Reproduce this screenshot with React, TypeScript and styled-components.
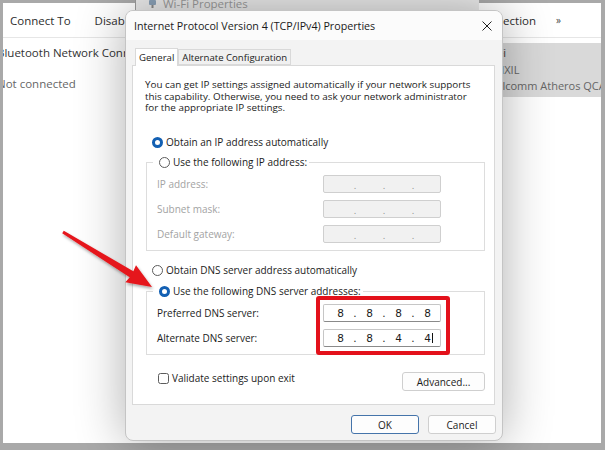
import styled, { createGlobalStyle } from 'styled-components'

const GlobalStyle = createGlobalStyle`
  html, body {
    margin: 0;
    padding: 0;
  }
  body {
    width: 605px;
    height: 450px;
    overflow: hidden;
    font-family: 'Open Sans', 'Noto Sans', sans-serif;
    color: #1b1b1b;
  }
`

const Desktop = styled.div`
  position: relative;
  width: 605px;
  height: 450px;
  overflow: hidden;
  background: #a9a9a9;
`

/* explorer window in the back */
const Explorer = styled.div`
  position: absolute;
  left: 3px;
  top: 3px;
  right: 4px;
  bottom: 7px;
  background: #fff;
  display: flex;
  flex-direction: column;
  overflow: hidden;
`

const Toolbar = styled.div`
  height: 34px;
  flex-shrink: 0;
  display: flex;
  align-items: center;
  justify-content: space-between;
  padding: 0 40px 0 7px;
  border-bottom: 1px solid #e6e6e6;
  font-size: 11.5px;
  color: #2d2d2d;
`

const ToolGroup = styled.div`
  display: flex;
  align-items: center;
  gap: 24px;
  white-space: nowrap;
`

const Chevron = styled.span`
  font-size: 10px;
  color: #444;
  margin-left: -4px;
`

const ItemList = styled.div`
  display: flex;
  justify-content: space-between;
  align-items: flex-start;
  padding-top: 5px;
`

const Item = styled.div<{ $selected?: boolean }>`
  display: flex;
  flex-direction: column;
  flex-shrink: 0;
  box-sizing: border-box;
  font-size: ${({ $selected }) => ($selected ? '11px' : '11.5px')};
  line-height: 16.5px;
  white-space: nowrap;
  overflow: hidden;
  color: #333;
  padding: 2px 0 2px ${({ $selected }) => ($selected ? '1px' : '2px')};
  width: ${({ $selected }) => ($selected ? '121px' : 'auto')};
  margin-left: ${({ $selected }) => ($selected ? '0' : '-8px')};
  background: ${({ $selected }) => ($selected ? '#d9d9d9' : 'transparent')};
`

const ItemSub = styled.span<{ $gap?: number }>`
  color: #666;
  margin-top: ${({ $gap }) => $gap ?? 0}px;
`

/* wi-fi properties window, mostly hidden */
const WifiWindow = styled.div`
  position: absolute;
  left: 135px;
  top: -12px;
  width: 343px;
  height: 300px;
  background: #ebebeb;
  border-left: 1px solid #9c9c9c;
`

const WifiTitle = styled.div`
  height: 31px;
  display: flex;
  align-items: center;
  gap: 6px;
  padding-left: 12px;
  font-size: 11.5px;
  color: #9b9b9b;
`

/* the TCP/IPv4 dialog */
const Dialog = styled.div`
  position: absolute;
  left: 125px;
  top: 10px;
  width: 378px;
  height: 431px;
  box-sizing: border-box;
  border-radius: 8px;
  background: #f3f3f3;
  border: 1px solid #c4c4c4;
  box-shadow: 0 0 50px rgba(0, 0, 0, 0.32);
  display: flex;
  flex-direction: column;
  overflow: hidden;
`

const TitleBar = styled.div`
  height: 29px;
  flex-shrink: 0;
  display: flex;
  align-items: center;
  justify-content: space-between;
  padding: 0 10px 0 8px;
  background: #fbfbfb;
  font-size: 10.7px;
  color: #1a1a1a;
`

const TabRow = styled.div`
  display: flex;
  align-items: flex-end;
  height: 18px;
  margin-top: 7px;
  padding-left: 9px;
`

const Tab = styled.div<{ $active?: boolean }>`
  height: ${({ $active }) => ($active ? '18px' : '16px')};
  box-sizing: border-box;
  display: flex;
  align-items: center;
  padding: 0 3px;
  margin-bottom: ${({ $active }) => ($active ? '-1px' : '0')};
  font-size: 9.6px;
  background: ${({ $active }) => ($active ? '#fff' : '#f0f0f0')};
  border: 1px solid #d9d9d9;
  border-bottom: ${({ $active }) => ($active ? 'none' : '1px solid #d9d9d9')};
  position: relative;
  z-index: ${({ $active }) => ($active ? 1 : 0)};
`

const Panel = styled.div`
  height: 340px;
  box-sizing: border-box;
  margin: 0 7px 0 6px;
  background: #fff;
  border: 1px solid #d9d9d9;
  padding: 13px 9px 0 13px;
  display: flex;
  flex-direction: column;
`

const Intro = styled.p`
  margin: 0 0 0 -1px;
  font-size: 9.85px;
  line-height: 11.7px;
`

const RadioRow = styled.label<{ $top?: number }>`
  display: flex;
  align-items: center;
  gap: 3px;
  height: 14px;
  font-size: 10px;
  margin-top: ${({ $top }) => $top ?? 0}px;
  margin-left: 6px;
  white-space: nowrap;
`

const Radio = styled.span<{ $checked?: boolean }>`
  width: 11px;
  height: 11px;
  box-sizing: border-box;
  border-radius: 50%;
  background: #fff;
  border: ${({ $checked }) => ($checked ? '3.5px solid #1360b3' : '1px solid #5c5c5c')};
`

const Group = styled.fieldset<{ $top?: number }>`
  margin: ${({ $top }) => $top ?? 0}px 0 0 0;
  padding: 6px 10px 7px 10px;
  border: 1px solid #dddddd;
  min-width: 0;
`

const Legend = styled.legend`
  padding: 0 2px 0 0;
  margin-left: -4px;
`

const FieldGrid = styled.div`
  display: grid;
  grid-template-columns: 166px 118px;
  row-gap: 7px;
  align-items: center;
`

const FieldLabel = styled.span<{ $disabled?: boolean; $row?: number }>`
  font-size: 10px;
  grid-row: ${({ $row }) => $row ?? 'auto'};
  color: ${({ $disabled }) => ($disabled ? '#a3a3a3' : '#1b1b1b')};
`

const FieldColumn = styled.div`
  position: relative;
  grid-column: 2;
  grid-row: 1 / span 2;
  display: flex;
  flex-direction: column;
  gap: 7px;
`

const IpBox = styled.div<{ $disabled?: boolean }>`
  height: 18px;
  box-sizing: border-box;
  display: grid;
  grid-template-columns: 25px 4px 25px 4px 25px 4px 25px;
  padding-left: 4px;
  align-items: center;
  border: 1px solid ${({ $disabled }) => ($disabled ? '#cfcfcf' : '#c6c6c6')};
  border-bottom-color: ${({ $disabled }) => ($disabled ? '#cfcfcf' : '#8a8a8a')};
  border-radius: 2px;
  background: ${({ $disabled }) => ($disabled ? '#f1f1f1' : '#fff')};
  font-size: 10.5px;
  font-family: 'DejaVu Sans', sans-serif;
`

const Octet = styled.span`
  text-align: center;
  color: #1b1b1b;
  position: relative;
`

const Caret = styled.span`
  position: absolute;
  top: 1px;
  bottom: 1px;
  margin-left: 1px;
  border-left: 1px solid #111;
`

const Dot = styled.span<{ $disabled?: boolean }>`
  text-align: center;
  color: ${({ $disabled }) => ($disabled ? '#8c8c8c' : '#1b1b1b')};
  font-size: ${({ $disabled }) => ($disabled ? '8px' : '10.5px')};
  padding-top: ${({ $disabled }) => ($disabled ? '4px' : '0')};
`

const Highlight = styled.div`
  position: absolute;
  inset: -8px -9px -8px -7px;
  border: 4.5px solid #e3111b;
  border-radius: 3px;
  pointer-events: none;
`

const BottomRow = styled.div`
  display: flex;
  justify-content: space-between;
  align-items: flex-start;
  margin-top: 16px;
`

const CheckRow = styled.label`
  display: flex;
  align-items: center;
  gap: 3px;
  font-size: 10px;
  margin-left: 12px;
`

const Checkbox = styled.span`
  width: 11px;
  height: 11px;
  box-sizing: border-box;
  border: 1px solid #5c5c5c;
  border-radius: 2.5px;
  background: #fff;
`

const Button = styled.button<{ $default?: boolean; $w?: number }>`
  width: ${({ $w }) => $w ?? 68}px;
  height: 19px;
  margin-top: 1px;
  padding: 0;
  box-sizing: border-box;
  font-family: inherit;
  font-size: 10px;
  color: #1b1b1b;
  background: #fdfdfd;
  border: ${({ $default }) => ($default ? '1.5px solid #4574aa' : '1px solid #cfcfcf')};
  border-radius: 3px;
`

const Footer = styled.div`
  display: flex;
  justify-content: flex-end;
  gap: 9px;
  padding: 9px 6px 0 0;
`

const Arrow = styled.svg`
  position: absolute;
  left: 0;
  top: 0;
  pointer-events: none;
`

function IpField({ values, disabled, caret }: { values?: string[]; disabled?: boolean; caret?: boolean }) {
  const octets = values ?? ['', '', '', '']
  return (
    <IpBox $disabled={disabled}>
      {octets.flatMap((v, i) => [
        <Octet key={'o' + i}>
          {v}
          {caret && i === 3 && <Caret />}
        </Octet>,
        i < 3 ? <Dot key={'d' + i} $disabled={disabled}>.</Dot> : null,
      ])}
    </IpBox>
  )
}

export default function App() {
  return (
    <Desktop>
      <GlobalStyle />
      <Explorer>
        <Toolbar>
          <ToolGroup>
            <span>Connect To</span>
            <span>Disable this network device</span>
          </ToolGroup>
          <ToolGroup>
            <span>Rename this connection</span>
            <Chevron>»</Chevron>
          </ToolGroup>
        </Toolbar>
        <ItemList>
          <Item>
            <span>Bluetooth Network Connection</span>
            <ItemSub $gap={14}>Not connected</ItemSub>
          </Item>
          <Item $selected>
            <span>Wi-Fi</span>
            <ItemSub>DANXIL</ItemSub>
            <ItemSub>Qualcomm Atheros QCA9377</ItemSub>
          </Item>
        </ItemList>
      </Explorer>

      <WifiWindow>
        <WifiTitle>
          <svg width="9" height="10" viewBox="0 0 9 10">
            <rect x="1" y="1" width="7" height="5" rx="1" fill="#8ba2b8" />
            <rect x="3.5" y="6" width="2" height="3" fill="#8a8a8a" />
          </svg>
          Wi-Fi Properties
        </WifiTitle>
      </WifiWindow>

      <Dialog>
        <TitleBar>
          <span>Internet Protocol Version 4 (TCP/IPv4) Properties</span>
          <svg width="10" height="10" viewBox="0 0 10 10">
            <path d="M0.5 0.5 L9.5 9.5 M9.5 0.5 L0.5 9.5" stroke="#222" strokeWidth="1" />
          </svg>
        </TitleBar>
        <TabRow>
          <Tab $active>General</Tab>
          <Tab>Alternate Configuration</Tab>
        </TabRow>
        <Panel>
          <Intro>
            You can get IP settings assigned automatically if your network supports
            <br />
            this capability. Otherwise, you need to ask your network administrator
            <br />
            for the appropriate IP settings.
          </Intro>

          <RadioRow $top={21}>
            <Radio $checked />
            Obtain an IP address automatically
          </RadioRow>
          <Group $top={6}>
            <Legend>
              <RadioRow>
                <Radio />
                Use the following IP address:
              </RadioRow>
            </Legend>
            <FieldGrid>
              <FieldLabel $disabled>IP address:</FieldLabel>
              <IpField disabled />
              <FieldLabel $disabled>Subnet mask:</FieldLabel>
              <IpField disabled />
              <FieldLabel $disabled>Default gateway:</FieldLabel>
              <IpField disabled />
            </FieldGrid>
          </Group>

          <RadioRow $top={12}>
            <Radio />
            Obtain DNS server address automatically
          </RadioRow>
          <Group $top={7}>
            <Legend>
              <RadioRow>
                <Radio $checked />
                Use the following DNS server addresses:
              </RadioRow>
            </Legend>
            <FieldGrid>
              <FieldLabel $row={1}>Preferred DNS server:</FieldLabel>
              <FieldLabel $row={2}>Alternate DNS server:</FieldLabel>
              <FieldColumn>
                <IpField values={['8', '8', '8', '8']} />
                <IpField values={['8', '8', '4', '4']} caret />
                <Highlight />
              </FieldColumn>
            </FieldGrid>
          </Group>

          <BottomRow>
            <CheckRow>
              <Checkbox />
              Validate settings upon exit
            </CheckRow>
            <Button $w={83}>Advanced...</Button>
          </BottomRow>
        </Panel>
        <Footer>
          <Button $default>OK</Button>
          <Button>Cancel</Button>
        </Footer>
      </Dialog>

      <Arrow width="605" height="450" viewBox="0 0 605 450">
        <defs>
          <filter id="arrowShadow" x="-20%" y="-20%" width="140%" height="140%">
            <feDropShadow dx="1" dy="2" stdDeviation="1.5" floodColor="#000" floodOpacity="0.35" />
          </filter>
        </defs>
        <polygon
          points="63.8,230.7 133.3,271.3 136,265.3 152,287 125.4,282.3 129.7,277.3 62.2,233.3"
          fill="#e5161b"
          filter="url(#arrowShadow)"
        />
      </Arrow>
    </Desktop>
  )
}
